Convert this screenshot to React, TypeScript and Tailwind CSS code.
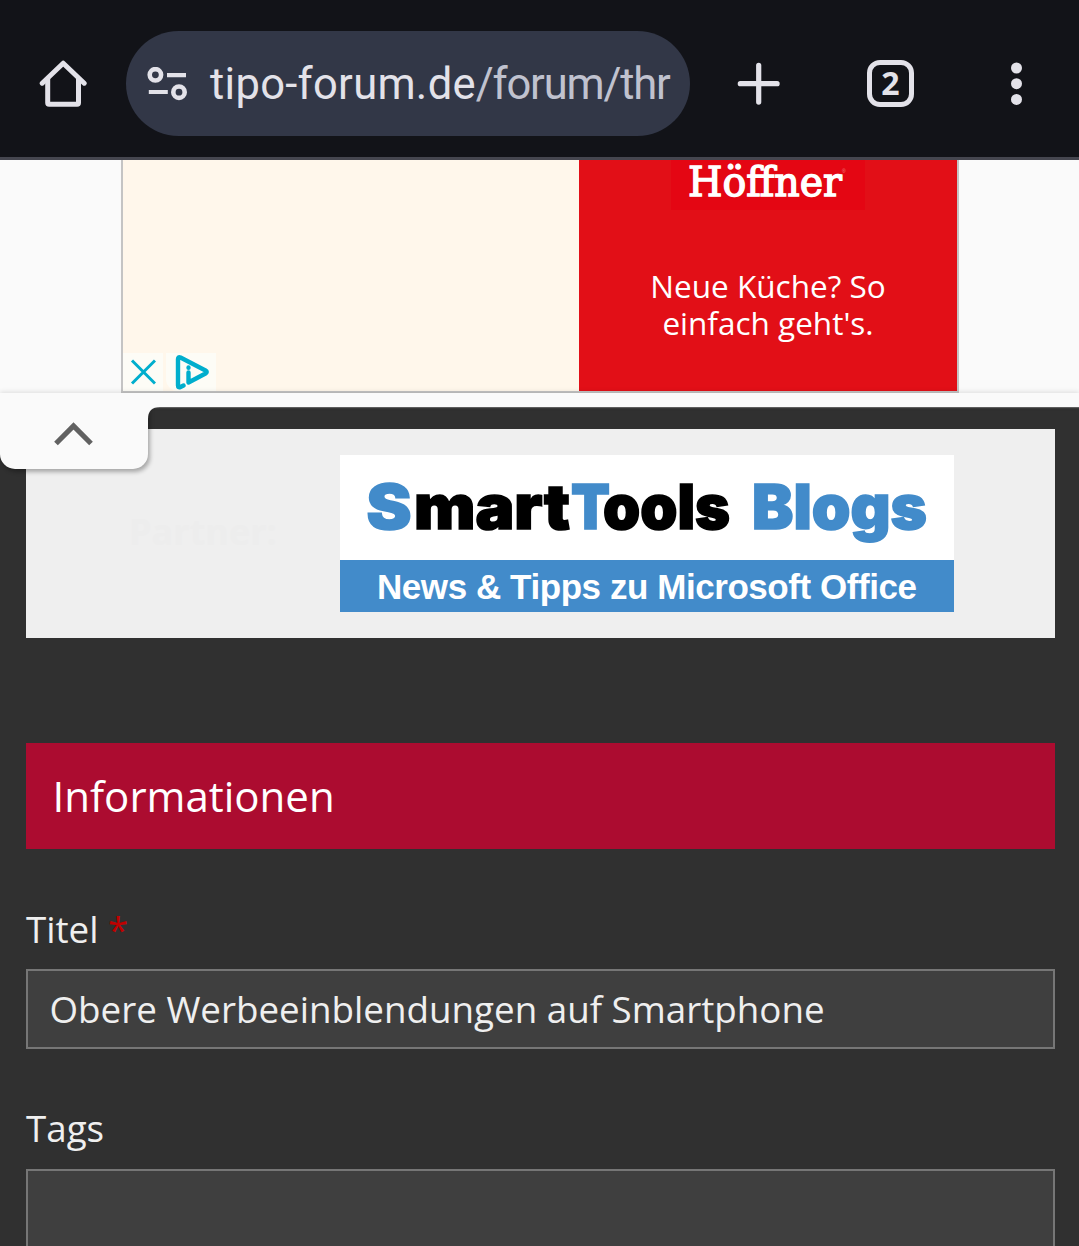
import { ReactNode } from "react";

const HomeIcon = () => (
  <svg width="48" height="48" viewBox="0 0 48 48" fill="none" stroke="#e3e2e9" strokeWidth="5" className="shrink-0">
    <path d="M3.2 23.2 24.2 3.2 45.2 23.2" strokeLinecap="round" strokeLinejoin="round" />
    <path d="M8.7 18.5v24.3q0 1.4 1.4 1.4h28q1.4 0 1.4-1.4V18.5" />
  </svg>
);

const TuneIcon = () => (
  <svg width="40" height="34" viewBox="0 0 40 34" fill="none" stroke="#e3e2e9" className="shrink-0">
    <circle cx="8.4" cy="7.8" r="5.7" strokeWidth="4.6" />
    <circle cx="32" cy="25.2" r="5.7" strokeWidth="4.6" />
    <path d="M20 8.2h19M1.8 25h19" strokeWidth="4.2" />
  </svg>
);

const PlusIcon = () => (
  <svg width="44" height="44" viewBox="0 0 44 44" fill="none" stroke="#e3e2e9" strokeWidth="5.2" strokeLinecap="round" className="shrink-0">
    <path d="M21.7 3.3v36.8M3.3 21.7h36.8" />
  </svg>
);

const MenuIcon = () => (
  <svg width="12" height="44" viewBox="0 0 12 44" fill="#e3e2e9" className="shrink-0">
    <circle cx="5.5" cy="6" r="5.5" />
    <circle cx="5.5" cy="21.7" r="5.5" />
    <circle cx="5.5" cy="37.4" r="5.5" />
  </svg>
);

const Toolbar = () => (
  <header className="flex h-40 items-start border-b-[3px] border-[#45464f] bg-[#121318]">
    <div className="flex h-[167px] w-full items-center pl-[39px]">
      <HomeIcon />
      <div className="ml-[39px] flex h-[105px] w-[564px] items-center rounded-full bg-[#323747] pl-[21px]">
        <TuneIcon />
        <span className="ml-[23px] whitespace-nowrap pt-[3px] font-['Roboto',sans-serif] text-[43.5px] leading-none tracking-[0.3px] text-[#e3e2e9]">
          tipo-forum.de<span className="tracking-[-1.2px] text-[#c0c2cf]">/forum/thr</span>
        </span>
      </div>
      <div className="ml-[47px]">
        <PlusIcon />
      </div>
      <div className="ml-[86px] flex h-[47px] w-[47px] items-center justify-center rounded-[13px] border-[5px] border-[#e3e2e9] pb-[2px] font-['Open_Sans',sans-serif] text-[32px] font-bold leading-none text-[#e3e2e9]">
        2
      </div>
      <div className="ml-[97px]">
        <MenuIcon />
      </div>
    </div>
  </header>
);

const Advert = () => (
  <section className="h-[233px] bg-[#fafafa] pl-[121px]">
    <div className="relative flex h-full w-[838px] border-x-2 border-b-2 border-[#c4c4c4] bg-[#fff7eb]">
      <div className="flex-1" />
      <div className="flex w-[378px] flex-col items-center bg-[#e20f17]">
        <div className="h-[50px] w-[194px] bg-[#e40613]">
          <svg width="194" height="50" viewBox="0 0 194 50">
            <text x="17" y="36" textLength="154" lengthAdjust="spacingAndGlyphs" fill="#fff" stroke="#fff" strokeWidth="1.4" fontFamily="DejaVu Serif, serif" fontSize="41">
              Höffner
            </text>
            <text x="171" y="13" fill="#f08080" fontFamily="Liberation Sans, sans-serif" fontSize="5">®</text>
          </svg>
        </div>
        <p className="mt-[57px] text-center text-[31.5px] leading-[37px] text-white">
          Neue Küche? So
          <br />
          einfach geht's.
        </p>
      </div>
      <div className="absolute bottom-0 left-0 flex gap-[3px]">
        <div className="flex h-[38px] w-10 items-center justify-center bg-[#fdfcf6]">
          <svg width="26" height="26" viewBox="0 0 26 26" stroke="#00aecd" strokeWidth="3" fill="none">
            <path d="m2 1.5 23 23M25 1.5l-23 23" />
          </svg>
        </div>
        <div className="flex h-[38px] w-[50px] items-center rounded-bl-xl bg-[#fdfcf6] pl-[9px]">
          <svg width="35" height="36" viewBox="0 0 35 36" fill="none" stroke="#00aecd" strokeWidth="4.4" strokeLinejoin="round" strokeLinecap="round">
            <path d="M8.5 31.5 5.5 33Q3 34.200 3 31.500V5Q3 2.300 5.500 3.500L30.500 16.500Q33 18 30.500 19.500L13.500 28.500V18.500" />
            <path d="M13.500 13.500v.4" strokeWidth="4.300" />
          </svg>
        </div>
      </div>
    </div>
  </section>
);

const CollapseTab = () => (
  <div className="relative z-10 h-[14px] bg-[#fafafa] shadow-[0_-1px_5px_rgba(0,0,0,0.12),0_1px_1px_rgba(120,120,120,0.7)]">
    <button className="absolute left-0 top-0 flex h-[76px] w-[148px] items-center justify-center rounded-b-[15px] bg-[#fafafa] shadow-[2px_3px_4px_rgba(0,0,0,0.3)] [clip-path:inset(14px_-10px_-10px_0)]">
      <svg width="40" height="24" viewBox="0 0 40 24" fill="none" stroke="#616161" strokeWidth="5.2" className="mt-[5px]">
        <path d="M2 21.5 19.500 4l17.500 17.500" />
      </svg>
    </button>
    <svg width="12" height="12" viewBox="0 0 12 12" className="absolute left-[148px] top-[14px]">
      <path d="M0 0h12Q0 0 0 12z" fill="#fafafa" />
    </svg>
  </div>
);

const PartnerBanner = () => (
  <section className="flex h-[209px] items-center bg-[#efefef] pl-[103px]">
    <span className="w-[211px] pb-[4px] text-[36px] font-bold leading-none text-[#ededed]">Partner:</span>
    <div className="w-[614px]">
      <div className="h-[105px] bg-white">
        <svg width="614" height="105" viewBox="0 0 614 105">
          <text y="74" fontFamily="Inter, sans-serif" fontWeight="900" fontSize="62" strokeWidth="1.6">
            <tspan x="26.5" textLength="45" lengthAdjust="spacingAndGlyphs" fill="#428bca" stroke="#428bca">S</tspan>
            <tspan x="74" textLength="156" lengthAdjust="spacingAndGlyphs" fill="#000" stroke="#000">mart</tspan>
            <tspan x="231" textLength="39" lengthAdjust="spacingAndGlyphs" fill="#428bca" stroke="#428bca">T</tspan>
            <tspan x="263" textLength="127" lengthAdjust="spacingAndGlyphs" fill="#000" stroke="#000">ools</tspan>
            <tspan x="412" textLength="175" lengthAdjust="spacingAndGlyphs" fill="#428bca" stroke="#428bca">Blogs</tspan>
          </text>
        </svg>
      </div>
      <div className="h-[52px] bg-[#428bca]">
        <svg width="614" height="52" viewBox="0 0 614 52">
          <text x="37" y="39" textLength="540" fill="#fff" fontFamily="Liberation Sans, sans-serif" fontWeight="700" fontSize="35">
            News &amp; Tipps zu Microsoft Office
          </text>
        </svg>
      </div>
    </div>
  </section>
);

const Field = ({ label, value, className }: { label: ReactNode; value: string; className: string }) => (
  <div className={`flex flex-col justify-between text-[36.75px] text-[#efefef] ${className}`}>
    <label className="leading-[50px]">{label}</label>
    <input
      type="text"
      defaultValue={value}
      className="h-20 w-full shrink-0 border-2 border-[#767676] bg-[#3f3f3f] pl-[21.5px] outline-none"
    />
  </div>
);

export default function App() {
  return (
    <div className="h-[1246px] w-full overflow-hidden bg-[#303030] font-['Open_Sans',sans-serif]">
      <Toolbar />
      <Advert />
      <CollapseTab />
      <main className="pl-[26px] pr-6 pt-[22px]">
        <PartnerBanner />
        <h2 className="mt-[105px] flex h-[106px] items-center bg-[#ac0c30] pb-[2px] pl-[26.5px] text-[42px] text-white">Informationen</h2>
        <Field
          label={
            <>
              Titel <span className="text-[#c00000]">*</span>
            </>
          }
          value="Obere Werbeeinblendungen auf Smartphone"
          className="mt-[55px] h-[145px]"
        />
        <Field label="Tags" value="" className="mt-[54px] h-[146px]" />
      </main>
    </div>
  );
}
